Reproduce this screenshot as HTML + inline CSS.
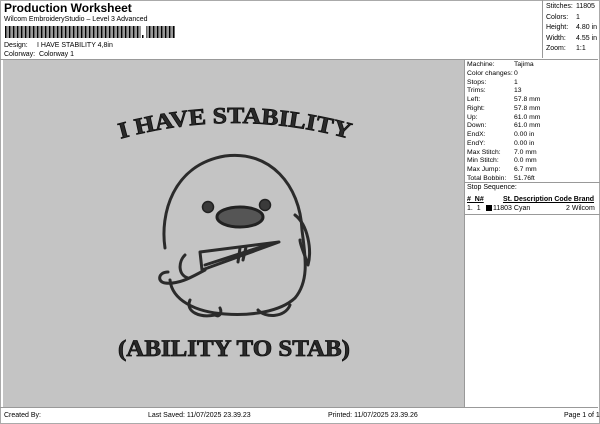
<!DOCTYPE html>
<html><head><style>
body{margin:0;width:600px;height:424px;background:#fff;font-family:"Liberation Sans",sans-serif;font-size:7px;color:#000;position:relative;overflow:hidden}
.a{position:absolute;white-space:nowrap}
.bx{position:absolute;border:1px solid #999}
</style></head><body>
<div class="bx" style="left:0;top:0;width:598px;height:422px;border-color:#aaa"></div>
<div class="a" style="left:4px;top:1px;font-size:12px;font-weight:bold">Production Worksheet</div>
<div class="a" style="left:4px;top:16px">Wilcom EmbroideryStudio – Level 3 Advanced</div>
<svg class="a" style="left:5px;top:26px" width="170" height="13">
<defs><pattern id="bc" width="4" height="12" patternUnits="userSpaceOnUse"><rect width="1.6" height="12" fill="#000"/><rect x="2.6" width="0.8" height="12" fill="#000"/></pattern></defs>
<rect x="0" y="0" width="136" height="12" fill="url(#bc)"/>
<rect x="137" y="9" width="1.5" height="3"/>
<rect x="141" y="0" width="29" height="12" fill="url(#bc)"/>
</svg>
<div class="a" style="left:4px;top:42px">Design:</div>
<div class="a" style="left:37px;top:42px">I HAVE STABILITY 4,8in</div>
<div class="a" style="left:4px;top:51px">Colorway:&nbsp; Colorway 1</div>
<div class="bx" style="left:0;top:59px;width:598px;height:0;border-width:1px 0 0 0"></div>
<div class="bx" style="left:542px;top:0;width:0;height:58px;border-width:0 0 0 1px"></div>
<div class="a" style="left:546px;top:2px;line-height:10.5px">Stitches:<br>Colors:<br>Height:<br>Width:<br>Zoom:</div>
<div class="a" style="left:576px;top:2px;line-height:10.5px">11805<br>1<br>4.80 in<br>4.55 in<br>1:1</div>
<div class="a" style="left:3px;top:60px;width:461px;height:347px;background:#c4c4c4"></div>
<div class="bx" style="left:464px;top:59px;width:0;height:348px;border-width:0 0 0 1px"></div>
<div class="a" style="left:467px;top:61px;line-height:8.75px;font-size:6.8px">Machine:<br>Color changes:<br>Stops:<br>Trims:<br>Left:<br>Right:<br>Up:<br>Down:<br>EndX:<br>EndY:<br>Max Stitch:<br>Min Stitch:<br>Max Jump:<br>Total Bobbin:</div>
<div class="a" style="left:514px;top:61px;line-height:8.75px;font-size:6.8px">Tajima<br>0<br>1<br>13<br>57.8 mm<br>57.8 mm<br>61.0 mm<br>61.0 mm<br>0.00 in<br>0.00 in<br>7.0 mm<br>0.0 mm<br>6.7 mm<br>51.76ft</div>
<div class="bx" style="left:465px;top:182px;width:135px;height:0;border-width:1px 0 0 0"></div>
<div class="a" style="left:467px;top:184px">Stop Sequence:</div>
<div class="a" style="left:467px;top:196px;font-weight:bold;text-decoration:underline">#&nbsp; N#</div>
<div class="a" style="left:503px;top:196px;font-weight:bold;text-decoration:underline">St. Description Code Brand</div>
<div class="a" style="left:467px;top:205px">1.&nbsp; 1</div>
<div class="a" style="left:486px;top:205px;width:6px;height:6px;background:#000"></div>
<div class="a" style="left:493px;top:205px">11803 Cyan</div>
<div class="a" style="left:566px;top:205px">2 Wilcom</div>
<div class="bx" style="left:465px;top:214px;width:135px;height:0;border-width:1px 0 0 0"></div>
<div class="bx" style="left:0;top:407px;width:598px;height:0;border-width:1px 0 0 0"></div>
<div class="a" style="left:4px;top:412px">Created By:</div>
<div class="a" style="left:148px;top:412px">Last Saved: 11/07/2025 23.39.23</div>
<div class="a" style="left:328px;top:412px">Printed: 11/07/2025 23.39.26</div>
<div class="a" style="left:564px;top:412px">Page 1 of 1</div>
<svg class="a" style="left:0;top:0" width="464" height="407">
<defs><path id="arc" d="M116,140 Q234,106 354,140"/></defs>
<text font-family="Liberation Serif" font-weight="bold" font-size="23" fill="#2a2a2a" stroke="#111" stroke-width="0.8" text-anchor="middle" textLength="232" lengthAdjust="spacingAndGlyphs"><textPath href="#arc" startOffset="50%" textLength="232" lengthAdjust="spacingAndGlyphs">I HAVE STABILITY</textPath></text>
<text x="234" y="356" font-family="Liberation Serif" font-weight="bold" font-size="23" fill="#2a2a2a" stroke="#111" stroke-width="0.8" text-anchor="middle" textLength="232" lengthAdjust="spacingAndGlyphs">(ABILITY TO STAB)</text>
<g fill="none" stroke="#2b2b2b" stroke-width="3" stroke-linejoin="round" stroke-linecap="round">
<path d="M165,248 C160,215 172,165 225,156 C270,150 300,185 302,230 C305,255 310,280 295,298 C280,312 250,316 225,314 C195,312 172,300 170,280"/>
<path d="M295,215 C308,225 312,250 308,265 C305,255 300,245 300,240"/>
<path d="M190,300 C185,312 200,318 215,315 C220,318 222,312 220,308"/>
<path d="M258,310 C265,318 285,318 290,305"/>
<path d="M168,272 C158,272 157,282 165,283 C180,285 195,275 205,270"/>
<path d="M185,255 C178,262 178,275 188,278"/>
<path d="M200,252 L202,270 L279,242 L200,252 Z" fill="#c4c4c4"/>
<path d="M205,265 L270,244"/>
<path d="M240,248 L238,262 M246,247 L243,260"/>
</g>
<circle cx="208" cy="207" r="5.5" fill="#3a3a3a" stroke="#222" stroke-width="1.5"/>
<circle cx="265" cy="205" r="5.5" fill="#3a3a3a" stroke="#222" stroke-width="1.5"/>
<ellipse cx="240" cy="217" rx="23" ry="10" fill="#555" stroke="#222" stroke-width="3"/>
</svg>
</body></html>
